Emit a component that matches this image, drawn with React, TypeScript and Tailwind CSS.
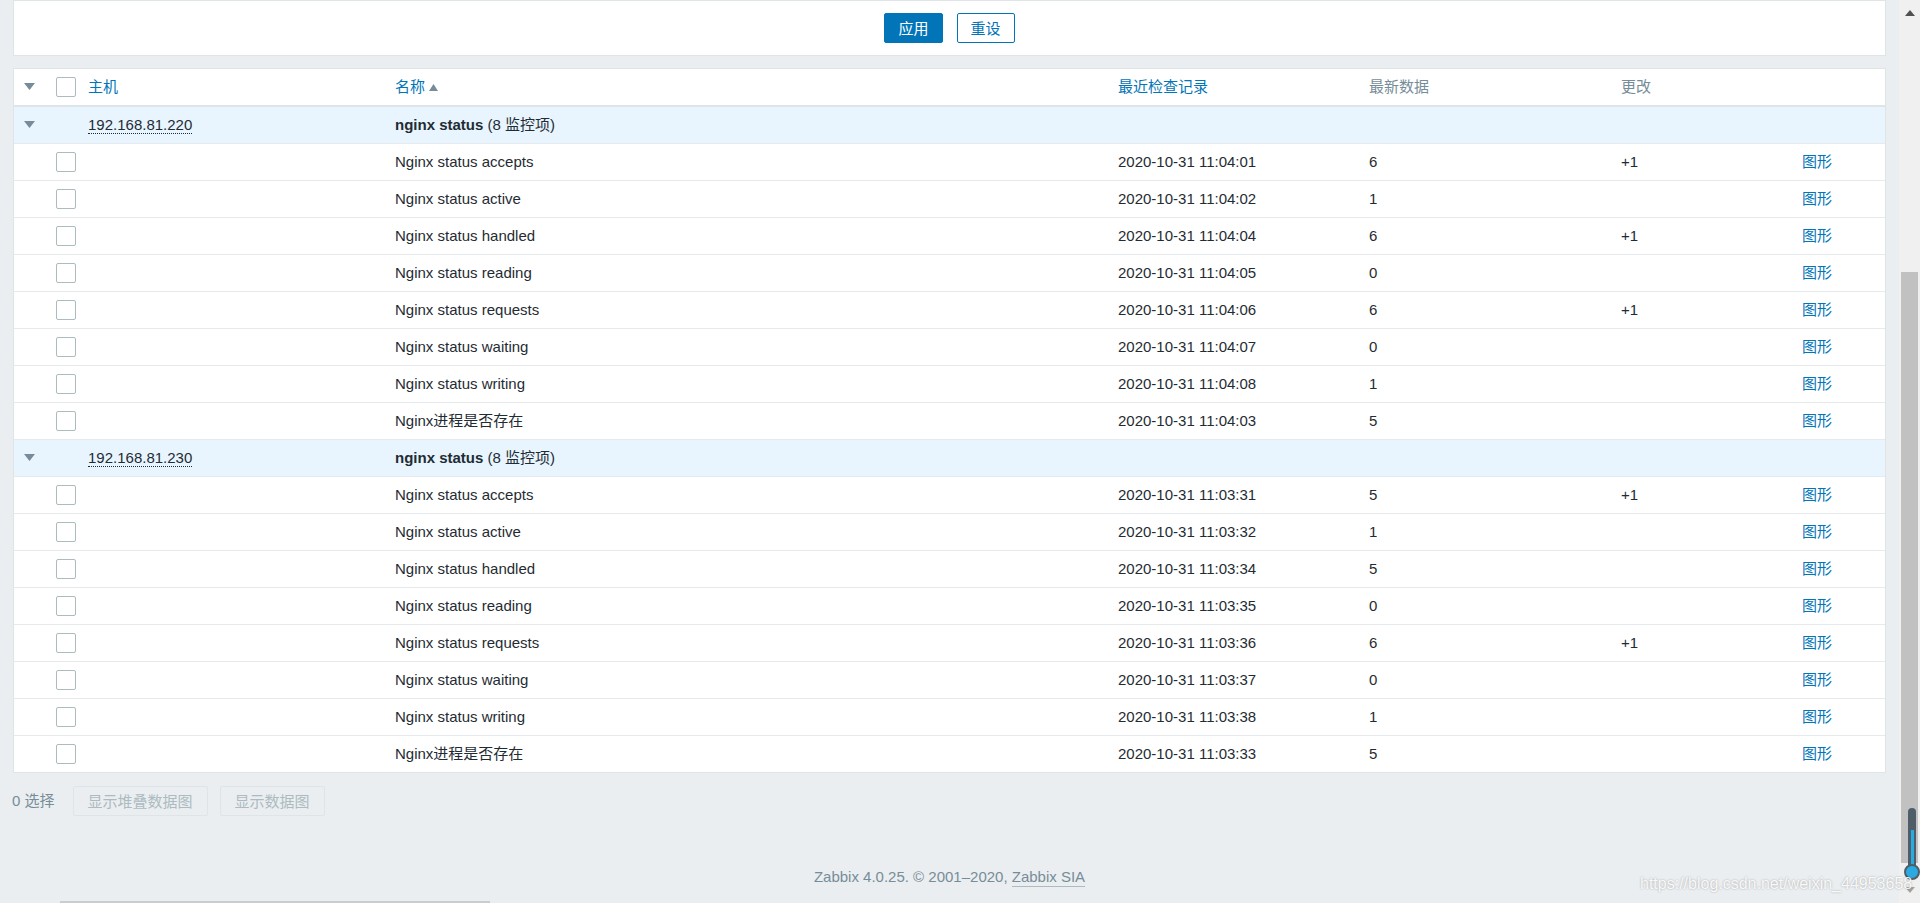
import React from "react";

type Item = { name: string; time: string; value: string; change: string };

const hosts: { ip: string; items: Item[] }[] = [
  {
    ip: "192.168.81.220",
    items: [
      { name: "Nginx status accepts", time: "2020-10-31 11:04:01", value: "6", change: "+1" },
      { name: "Nginx status active", time: "2020-10-31 11:04:02", value: "1", change: "" },
      { name: "Nginx status handled", time: "2020-10-31 11:04:04", value: "6", change: "+1" },
      { name: "Nginx status reading", time: "2020-10-31 11:04:05", value: "0", change: "" },
      { name: "Nginx status requests", time: "2020-10-31 11:04:06", value: "6", change: "+1" },
      { name: "Nginx status waiting", time: "2020-10-31 11:04:07", value: "0", change: "" },
      { name: "Nginx status writing", time: "2020-10-31 11:04:08", value: "1", change: "" },
      { name: "Nginx进程是否存在", time: "2020-10-31 11:04:03", value: "5", change: "" },
    ],
  },
  {
    ip: "192.168.81.230",
    items: [
      { name: "Nginx status accepts", time: "2020-10-31 11:03:31", value: "5", change: "+1" },
      { name: "Nginx status active", time: "2020-10-31 11:03:32", value: "1", change: "" },
      { name: "Nginx status handled", time: "2020-10-31 11:03:34", value: "5", change: "" },
      { name: "Nginx status reading", time: "2020-10-31 11:03:35", value: "0", change: "" },
      { name: "Nginx status requests", time: "2020-10-31 11:03:36", value: "6", change: "+1" },
      { name: "Nginx status waiting", time: "2020-10-31 11:03:37", value: "0", change: "" },
      { name: "Nginx status writing", time: "2020-10-31 11:03:38", value: "1", change: "" },
      { name: "Nginx进程是否存在", time: "2020-10-31 11:03:33", value: "5", change: "" },
    ],
  },
];

// column widths measured from the screenshot
const cols = "grid grid-cols-[32px_32px_307px_723px_251px_252px_181px_1fr] items-center";

function Caret() {
  return (
    <svg width="11" height="8" viewBox="0 0 11 8" className="block">
      <path d="M0 0 L11 0 L5.5 7 Z" fill="#768d99" />
    </svg>
  );
}

function Checkbox() {
  return <span className="block w-[20px] h-[20px] border border-[#acbbc2] rounded-[2px] bg-white" />;
}

export default function App() {
  return (
    <div className="relative flex w-[1920px] h-[903px] overflow-hidden bg-[#ebeef0] text-[15px] text-[#1f2c33] font-['Liberation_Sans','Noto_Sans_CJK_SC',sans-serif]">
      <div className="flex flex-col w-[1899px]">
        {/* filter form (bottom part) */}
        <div className="mx-[13px] h-[56px] border border-[#dfe4e7] bg-white flex justify-center gap-[14px] pt-[12px]">
          <button className="h-[30px] px-[13px] rounded-[2px] bg-[#0275b8] border border-[#0275b8] text-white leading-none">
            应用
          </button>
          <button className="h-[30px] px-[13px] rounded-[2px] bg-white border border-[#0275b8] text-[#0275b8] leading-none">
            重设
          </button>
        </div>

        {/* items table */}
        <div className="mx-[13px] mt-[12px] border border-[#dfe4e7] bg-white">
          <div className={`${cols} h-[36px]`}>
            <div className="pl-[10px]">
              <Caret />
            </div>
            <div className="pl-[10px]">
              <Checkbox />
            </div>
            <div className="pl-[10px] text-[#0275b8]">主机</div>
            <div className="pl-[10px] text-[#0275b8] flex items-center gap-[4px]">
              名称
              <svg width="9" height="7" viewBox="0 0 9 7">
                <path d="M0 7 L9 7 L4.5 0 Z" fill="#768d99" />
              </svg>
            </div>
            <div className="pl-[10px] text-[#0275b8]">最近检查记录</div>
            <div className="pl-[10px] text-[#768d99]">最新数据</div>
            <div className="pl-[10px] text-[#768d99]">更改</div>
            <div />
          </div>
          <div className="h-[2px] bg-[#dfe4e7]" />

          {hosts.map((h, hi) => (
            <React.Fragment key={h.ip}>
              <div className={`${cols} ${hi > 0 ? "h-[37px] border-t border-[#e6eaec]" : "h-[36px]"} bg-[#e8f5ff]`}>
                <div className="pl-[10px]">
                  <Caret />
                </div>
                <div />
                <div className="pl-[10px]">
                  <span className="border-b border-dotted border-[#1f2c33]">{h.ip}</span>
                </div>
                <div className="pl-[10px]">
                  <span className="font-bold">nginx status</span> (8 监控项)
                </div>
                <div />
                <div />
                <div />
                <div />
              </div>
              {h.items.map((it, i) => (
                <div key={i} className={`${cols} h-[37px] border-t border-[#e6eaec]`}>
                  <div />
                  <div className="pl-[10px]">
                    <Checkbox />
                  </div>
                  <div />
                  <div className="pl-[10px]">{it.name}</div>
                  <div className="pl-[10px]">{it.time}</div>
                  <div className="pl-[10px]">{it.value}</div>
                  <div className="pl-[10px]">{it.change}</div>
                  <div className="pl-[10px] text-[#0275b8]">图形</div>
                </div>
              ))}
            </React.Fragment>
          ))}
        </div>

        {/* selection actions */}
        <div className="mt-[13px] h-[30px] pl-[12px] flex items-center text-[#768d99]">
          <span>0 选择</span>
          <button className="ml-[18px] h-[30px] px-[14px] border border-[#dfe4e7] rounded-[2px] bg-[#ebeef0] text-[#acbbc2] leading-none">
            显示堆叠数据图
          </button>
          <button className="ml-[12px] h-[30px] px-[14px] border border-[#dfe4e7] rounded-[2px] bg-[#ebeef0] text-[#acbbc2] leading-none">
            显示数据图
          </button>
        </div>

        {/* footer */}
        <div className="mt-[52px] h-[17px] flex justify-center items-center text-[#768d99] leading-none">
          <span>
            Zabbix 4.0.25. © 2001–2020,{" "}
            <span className="border-b border-[#acbbc2] pb-[1px]">Zabbix SIA</span>
          </span>
        </div>
        <div className="mt-auto ml-[60px] w-[430px] h-[2px] bg-[#c9cdd0]" />
      </div>

      {/* browser scrollbar */}
      <div className="w-[21px] h-full bg-[#f0f0f0] flex flex-col items-center">
        <svg width="10" height="6" viewBox="0 0 10 6" className="mt-[10px]">
          <path d="M0 6 L10 6 L5 0 Z" fill="#505050" />
        </svg>
        <div className="mt-[256px] w-[17px] h-[591px] bg-[#c1c1c1]" />
        <svg width="10" height="6" viewBox="0 0 10 6" className="mt-[24px]">
          <path d="M0 0 L10 0 L5 6 Z" fill="#a3a3a3" />
        </svg>
      </div>

      {/* overlay widget and watermark */}
      <div className="absolute left-[1904px] top-[808px] w-[16px] h-[72px] flex flex-col items-center">
        <div className="w-[8px] h-[60px] rounded-t-[4px] bg-[#4e5d68] flex flex-col justify-end items-center pb-[2px]">
          <div className="w-[3px] h-[36px] bg-[#2aaae3]" />
        </div>
        <div className="-mt-[4px] w-[16px] h-[16px] rounded-full bg-[#2aaae3] border-[2px] border-[#4e5d68]" />
      </div>
      <div className="absolute left-[1640px] top-[876px] text-[16px] leading-none text-white/90 [text-shadow:0_0_2px_rgba(0,0,0,0.35)]">
        https://blog.csdn.net/weixin_44953658
      </div>
    </div>
  );
}
